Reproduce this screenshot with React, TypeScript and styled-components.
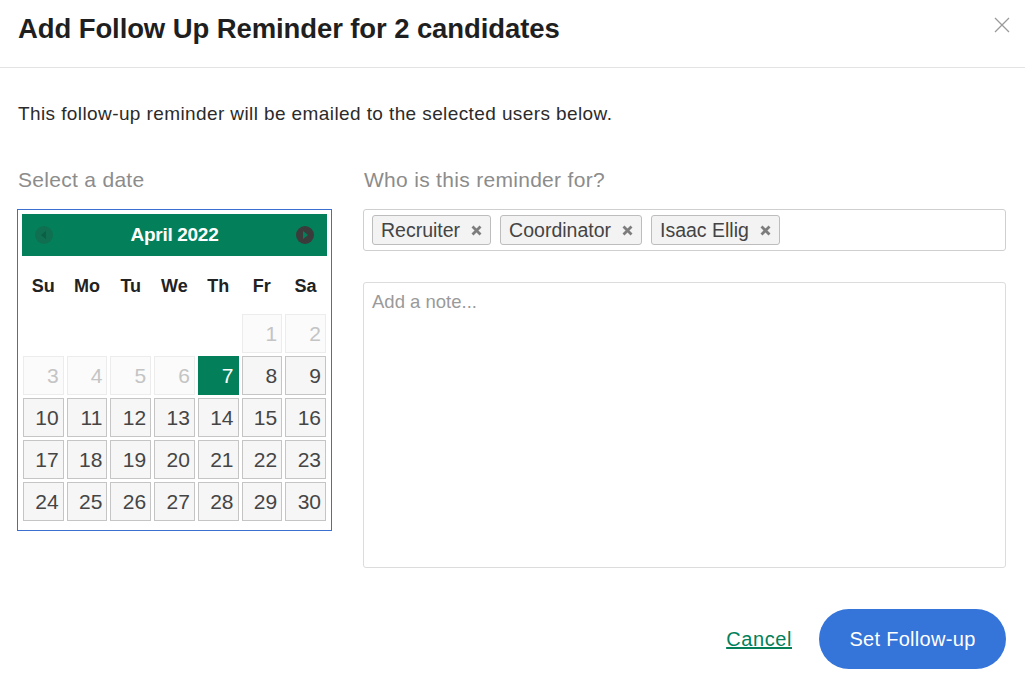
import styled, { createGlobalStyle } from "styled-components";

const GlobalStyle = createGlobalStyle`
  html, body {
    margin: 0;
    padding: 0;
    background: #ffffff;
    font-family: "Liberation Sans", Arial, sans-serif;
    color: #222;
  }
`;

const Modal = styled.div`
  width: 1025px;
  height: 678px;
  display: flex;
  flex-direction: column;
  overflow: hidden;
`;

const Header = styled.div`
  height: 68px;
  box-sizing: border-box;
  border-bottom: 1px solid #e3e3e3;
  display: flex;
  align-items: center;
  justify-content: space-between;
  padding: 0 13px 10px 18px;
`;

const Title = styled.h1`
  margin: 0;
  font-size: 27.5px;
  font-weight: 700;
  color: #1f1f1f;
  letter-spacing: -0.1px;
`;

const CloseButton = styled.button`
  border: none;
  background: none;
  padding: 0;
  width: 20px;
  height: 20px;
  margin-top: -8px;
  display: flex;
  align-items: center;
  justify-content: center;
  cursor: pointer;
`;

const Body = styled.div`
  padding: 33px 19px 0 17px;
  display: flex;
  flex-direction: column;
`;

const Intro = styled.p`
  margin: 0 0 0 1px;
  font-size: 19px;
  line-height: 26px;
  letter-spacing: 0.4px;
  color: #2b2b2b;
`;

const Columns = styled.div`
  display: flex;
  gap: 31px;
  margin-top: 41px;
`;

const Column = styled.div<{ $width?: number }>`
  display: flex;
  flex-direction: column;
  ${(p) => (p.$width ? `width: ${p.$width}px;` : "flex: 1;")}
`;

const Label = styled.div`
  font-size: 21px;
  line-height: 24px;
  letter-spacing: 0.3px;
  color: #8c8c8c;
  margin: 0 0 17px 1px;
`;

const Calendar = styled.div`
  border: 1px solid #3c70d0;
  padding: 4px;
  box-sizing: border-box;
  width: 315px;
  height: 322px;
`;

const CalHeader = styled.div`
  height: 42px;
  background: #03805a;
  display: flex;
  align-items: center;
  justify-content: space-between;
  padding: 0 13px;
`;

const MonthName = styled.div`
  color: #fff;
  font-weight: 700;
  font-size: 19px;
  letter-spacing: -0.3px;
`;

const NavDot = styled.span<{ $dim?: boolean }>`
  width: 18px;
  height: 18px;
  border-radius: 50%;
  background: ${(p) => (p.$dim ? "#0f6f50" : "#3b3b3b")};
  display: flex;
  align-items: center;
  justify-content: center;
`;

const Table = styled.table`
  width: calc(100% + 4px);
  margin: 2px -2px 0;
  border-collapse: separate;
  border-spacing: 3px;
  table-layout: fixed;
`;

const DayHead = styled.th`
  font-size: 18px;
  font-weight: 700;
  color: #222;
  height: 50px;
  padding: 0;
  text-align: center;
`;

const Cell = styled.td<{ $kind?: "off" | "on" | "sel" | "empty" }>`
  height: 37px;
  padding: 0 4px 0 0;
  text-align: right;
  font-size: 21px;
  border: 1px solid
    ${(p) =>
      p.$kind === "off" ? "#ececec" : p.$kind === "sel" ? "#03805a" : p.$kind === "empty" ? "transparent" : "#c5c5c5"};
  background: ${(p) =>
    p.$kind === "off" ? "#fbfbfb" : p.$kind === "sel" ? "#03805a" : p.$kind === "empty" ? "transparent" : "#f6f6f6"};
  color: ${(p) => (p.$kind === "off" ? "#c4c4c4" : p.$kind === "sel" ? "#fff" : "#454545")};
`;

const TagBox = styled.div`
  border: 1px solid #cfcfcf;
  border-radius: 3px;
  height: 42px;
  box-sizing: border-box;
  display: flex;
  align-items: center;
  gap: 9px;
  padding: 0 8px;
`;

const Tag = styled.span`
  display: inline-flex;
  align-items: center;
  gap: 11px;
  height: 30px;
  box-sizing: border-box;
  padding: 0 8px;
  border: 1px solid #bdbdbd;
  border-radius: 3px;
  background: #f3f3f3;
  font-size: 19.5px;
  color: #444;
`;

const TagRemove = styled.span`
  display: flex;
  align-items: center;
`;

const Note = styled.textarea`
  margin-top: 31px;
  height: 286px;
  box-sizing: border-box;
  border: 1px solid #dcdcdc;
  border-radius: 3px;
  padding: 8px 8px;
  resize: none;
  font-family: "Liberation Sans", Arial, sans-serif;
  font-size: 18.5px;
  color: #333;
  &::placeholder {
    color: #9a9a9a;
  }
`;

const Footer = styled.div`
  display: flex;
  justify-content: flex-end;
  align-items: center;
  gap: 27px;
  margin-top: 41px;
`;

const CancelLink = styled.a`
  color: #03805a;
  font-size: 20px;
  letter-spacing: 0.6px;
  text-decoration: underline;
  cursor: pointer;
`;

const PrimaryButton = styled.button`
  height: 60px;
  width: 187px;
  border: none;
  border-radius: 30px;
  background: #3574d8;
  color: #fff;
  font-family: "Liberation Sans", Arial, sans-serif;
  font-size: 20px;
  letter-spacing: 0.3px;
  cursor: pointer;
`;

type Day = { n?: number; kind: "off" | "on" | "sel" | "empty" };

const weeks: Day[][] = [
  [
    { kind: "empty" }, { kind: "empty" }, { kind: "empty" }, { kind: "empty" }, { kind: "empty" },
    { n: 1, kind: "off" }, { n: 2, kind: "off" },
  ],
  [
    { n: 3, kind: "off" }, { n: 4, kind: "off" }, { n: 5, kind: "off" }, { n: 6, kind: "off" },
    { n: 7, kind: "sel" }, { n: 8, kind: "on" }, { n: 9, kind: "on" },
  ],
  [10, 11, 12, 13, 14, 15, 16].map((n) => ({ n, kind: "on" as const })),
  [17, 18, 19, 20, 21, 22, 23].map((n) => ({ n, kind: "on" as const })),
  [24, 25, 26, 27, 28, 29, 30].map((n) => ({ n, kind: "on" as const })),
];

const dayNames = ["Su", "Mo", "Tu", "We", "Th", "Fr", "Sa"];
const tags = ["Recruiter", "Coordinator", "Isaac Ellig"];

export default function App() {
  return (
    <Modal>
      <GlobalStyle />
      <Header>
        <Title>Add Follow Up Reminder for 2 candidates</Title>
        <CloseButton aria-label="Close">
          <svg width="16" height="16" viewBox="0 0 16 16">
            <path d="M1 1L15 15M15 1L1 15" stroke="#9a9a9a" strokeWidth="1.3" />
          </svg>
        </CloseButton>
      </Header>
      <Body>
        <Intro>This follow-up reminder will be emailed to the selected users below.</Intro>
        <Columns>
          <Column $width={315}>
            <Label>Select a date</Label>
            <Calendar>
              <CalHeader>
                <NavDot $dim>
                  <svg width="8" height="8" viewBox="0 0 8 8">
                    <path d="M6 0L1 4L6 8Z" fill="#0a5f44" />
                  </svg>
                </NavDot>
                <MonthName>April 2022</MonthName>
                <NavDot>
                  <svg width="8" height="8" viewBox="0 0 8 8">
                    <path d="M2 0L7 4L2 8Z" fill="#03805a" />
                  </svg>
                </NavDot>
              </CalHeader>
              <Table>
                <thead>
                  <tr>
                    {dayNames.map((d) => (
                      <DayHead key={d}>{d}</DayHead>
                    ))}
                  </tr>
                </thead>
                <tbody>
                  {weeks.map((w, i) => (
                    <tr key={i}>
                      {w.map((d, j) => (
                        <Cell key={j} $kind={d.kind}>
                          {d.n}
                        </Cell>
                      ))}
                    </tr>
                  ))}
                </tbody>
              </Table>
            </Calendar>
          </Column>
          <Column>
            <Label>Who is this reminder for?</Label>
            <TagBox>
              {tags.map((t) => (
                <Tag key={t}>
                  {t}
                  <TagRemove>
                    <svg width="11" height="11" viewBox="0 0 11 11">
                      <path d="M1.5 1.5L9.5 9.5M9.5 1.5L1.5 9.5" stroke="#7d7d7d" strokeWidth="2.8" />
                    </svg>
                  </TagRemove>
                </Tag>
              ))}
            </TagBox>
            <Note placeholder="Add a note..." />
          </Column>
        </Columns>
        <Footer>
          <CancelLink>Cancel</CancelLink>
          <PrimaryButton>Set Follow-up</PrimaryButton>
        </Footer>
      </Body>
    </Modal>
  );
}
